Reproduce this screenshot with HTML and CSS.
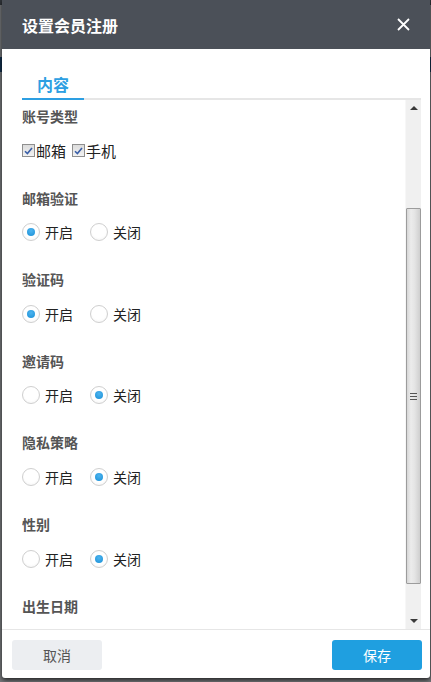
FILE: index.html
```html
<!DOCTYPE html>
<html lang="zh">
<head>
<meta charset="utf-8">
<title>设置会员注册</title>
<link rel="stylesheet" href="styles.css">
</head>
<body>
<div class="modal">
  <div class="modal-header">
    <span class="modal-title">设置会员注册</span>
    <svg class="close" width="13" height="13" viewBox="0 0 13 13"><path d="M1 1L12 12M12 1L1 12" stroke="#fff" stroke-width="1.8" fill="none"/></svg>
  </div>
  <div class="modal-body">
    <div class="tabs"><span class="tab">内容</span></div>
    <div class="scroll-area">
      <div class="content">
        <div class="field">
          <div class="field-label">账号类型</div>
          <div class="field-control">
            <label class="check"><span class="box"><svg width="9" height="8" viewBox="0 0 9 8"><path d="M1 4.2L3.4 6.6L8 1" stroke="#3a5fa8" stroke-width="1.6" fill="none"/></svg></span>邮箱</label>
            <label class="check"><span class="box"><svg width="9" height="8" viewBox="0 0 9 8"><path d="M1 4.2L3.4 6.6L8 1" stroke="#3a5fa8" stroke-width="1.6" fill="none"/></svg></span>手机</label>
          </div>
        </div>
        <div class="field">
          <div class="field-label">邮箱验证</div>
          <div class="field-control">
            <label class="radio"><span class="dot on"></span>开启</label>
            <label class="radio"><span class="dot"></span>关闭</label>
          </div>
        </div>
        <div class="field">
          <div class="field-label">验证码</div>
          <div class="field-control">
            <label class="radio"><span class="dot on"></span>开启</label>
            <label class="radio"><span class="dot"></span>关闭</label>
          </div>
        </div>
        <div class="field">
          <div class="field-label">邀请码</div>
          <div class="field-control">
            <label class="radio"><span class="dot"></span>开启</label>
            <label class="radio"><span class="dot on"></span>关闭</label>
          </div>
        </div>
        <div class="field">
          <div class="field-label">隐私策略</div>
          <div class="field-control">
            <label class="radio"><span class="dot"></span>开启</label>
            <label class="radio"><span class="dot on"></span>关闭</label>
          </div>
        </div>
        <div class="field">
          <div class="field-label">性别</div>
          <div class="field-control">
            <label class="radio"><span class="dot"></span>开启</label>
            <label class="radio"><span class="dot on"></span>关闭</label>
          </div>
        </div>
        <div class="field">
          <div class="field-label">出生日期</div>
        </div>
      </div>
      <div class="scrollbar">
        <div class="arrow up"></div>
        <div class="track">
          <div class="thumb"><span class="grip"></span></div>
        </div>
        <div class="arrow down"></div>
      </div>
    </div>
  </div>
  <div class="modal-footer">
    <button class="btn btn-cancel">取消</button>
    <button class="btn btn-save">保存</button>
  </div>
</div>
</body>
</html>
```

FILE: styles.css
```css
* { box-sizing: border-box; }
html, body { margin: 0; padding: 0; }
body {
  width: 431px;
  height: 682px;
  overflow: hidden;
  font-family: "Noto Sans CJK SC", "Noto Sans", sans-serif;
  background: linear-gradient(to bottom, #2f3338 0, #2f3338 5px, #76787b 5px, #76787b 57px, #12304d 57px, #12304d 72px, #76787b 72px);
}
.modal {
  margin-left: 2px;
  width: 428px;
  height: 678px;
  background: #fff;
  border-radius: 0 0 3px 3px;
  box-shadow: 0 2px 5px rgba(0,0,0,0.75);
  display: flex;
  flex-direction: column;
}
.modal-header {
  height: 49px;
  flex: none;
  background: #4b5058;
  display: flex;
  align-items: center;
  justify-content: space-between;
  padding: 0 20px 0 20px;
}
.modal-title {
  color: #fff;
  font-size: 16px;
  font-weight: bold;
  line-height: 20px;
}
.close { display: block; margin-top: -1px; }
.modal-body {
  padding: 0 9px 0 20px;
  display: flex;
  flex-direction: column;
}
.tabs {
  margin-top: 22px;
  height: 29px;
  border-bottom: 2px solid #e6e6e6;
  display: flex;
}
.tab {
  width: 62px;
  height: 29px;
  line-height: 27px;
  text-align: center;
  font-size: 16px;
  font-weight: bold;
  color: #2d9fe2;
  border-bottom: 2px solid #2d9fe2;
}
.scroll-area {
  height: 529px;
  display: flex;
}
.content {
  flex: 1;
  overflow: hidden;
  padding-top: 6px;
}
.field { padding-bottom: 27px; }
.field-label {
  line-height: 20px;
  font-size: 14px;
  font-weight: bold;
  color: #555;
}
.field-control {
  margin-top: 14.6px;
  height: 20px;
  display: flex;
  align-items: center;
  font-size: 14px;
  color: #222;
}
.check {
  display: flex;
  align-items: center;
  margin-right: 6px;
  line-height: 20px;
  font-size: 15px;
}
.box {
  width: 13px;
  height: 13px;
  border: 1px solid #8f8f8f;
  background: linear-gradient(#dcdcdc, #f2f2f2);
  display: flex;
  align-items: center;
  justify-content: center;
  margin-right: 1px;
}
.box svg { display: block; }
.radio {
  display: flex;
  align-items: center;
  margin-right: 17px;
  line-height: 20px;
}
.dot {
  width: 18px;
  height: 18px;
  border-radius: 50%;
  border: 1px solid #cfcfcf;
  background: radial-gradient(circle at 50% 40%, #fff 55%, #f0f0f0 100%);
  margin-right: 5px;
  display: flex;
  align-items: center;
  justify-content: center;
}
.dot.on::after {
  content: "";
  width: 8px;
  height: 8px;
  border-radius: 50%;
  background: radial-gradient(circle at 50% 35%, #4db4ef, #1a8fd6);
}
.scrollbar {
  width: 16px;
  flex: none;
  background: #f0f0f0;
  border-left: 1px solid #f7f7f7;
  display: flex;
  flex-direction: column;
}
.arrow {
  height: 16px;
  flex: none;
  display: flex;
  align-items: center;
  justify-content: center;
}
.arrow::after {
  content: "";
  width: 0;
  height: 0;
  border-left: 4px solid transparent;
  border-right: 4px solid transparent;
}
.arrow.up::after { border-bottom: 4px solid #3a3a3a; }
.arrow.down::after { border-top: 4px solid #3a3a3a; }
.track {
  flex: 1;
  padding-top: 92px;
}
.thumb {
  height: 376px;
  border: 1px solid #9c9c9c;
  border-radius: 1px;
  background: linear-gradient(to right, #d6d6d6, #ececec 30%, #e4e4e4 60%, #cfcfcf);
  display: flex;
  align-items: center;
  justify-content: center;
}
.grip {
  width: 7px;
  height: 7px;
  background: repeating-linear-gradient(to bottom, #555 0, #555 1px, transparent 1px, transparent 3px);
}
.modal-footer {
  margin-top: auto;
  border-top: 1px solid #e6e6e6;
  padding: 10px 8px 8px 10px;
  display: flex;
  justify-content: space-between;
}
.btn {
  width: 90px;
  height: 30px;
  border: none;
  border-radius: 3px;
  font-family: "Noto Sans CJK SC", "Noto Sans", sans-serif;
  font-size: 14px;
  padding: 0;
}
.btn-cancel { background: #eceef1; color: #555; }
.btn-save { background: #1f9fe0; color: #fff; }
```
